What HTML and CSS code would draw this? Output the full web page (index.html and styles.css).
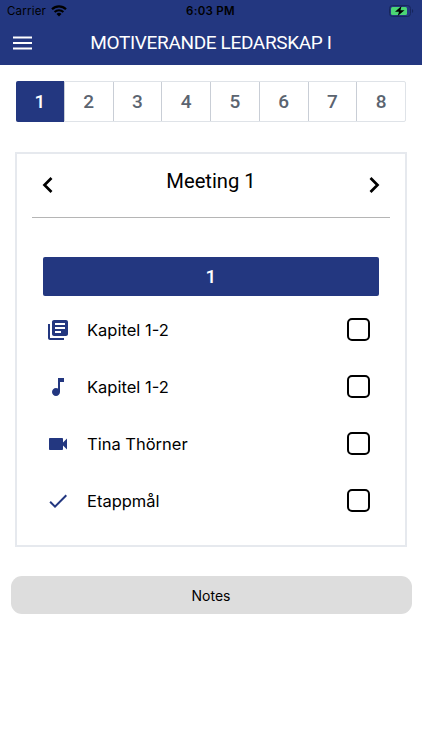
FILE: index.html
```html
<!DOCTYPE html>
<html lang="sv">
<head>
  <meta charset="UTF-8">
  <meta name="viewport" content="width=device-width, initial-scale=1.0">
  <title>Motiverande Ledarskap I</title>
  <link rel="stylesheet" href="styles.css">
</head>
<body>
  <header>
    <div class="status-bar">
      <div class="carrier">
        <span>Carrier</span>
        <svg width="16" height="12" viewBox="0 0 16 12" fill="none" stroke="#000">
          <path d="M1 4.2a10 10 0 0 1 14 0" stroke-width="2.2"/>
          <path d="M3.6 7a6.3 6.3 0 0 1 8.8 0" stroke-width="2"/>
          <path d="M8 11.4L5.5 9a3.6 3.6 0 0 1 5 0z" fill="#000" stroke="none"/>
        </svg>
      </div>
      <span class="time">6:03 PM</span>
      <svg class="battery" width="25" height="12" viewBox="0 0 25 12">
        <rect x=".5" y=".5" width="21" height="11" rx="3" fill="none" stroke="#17265c"/>
        <rect x="2" y="2" width="16" height="8" rx="1.5" fill="#4bd575"/>
        <path d="M23 4v4c1.600-.6 1.600-3.400 0-4z" fill="#17265c"/>
        <path d="M12.500 1L6 6.800h4L8.700 11 15.500 5.300h-4z" fill="#000"/>
      </svg>
    </div>
    <div class="nav-bar">
      <button class="menu" aria-label="Menu">
        <svg width="20" height="14" viewBox="0 0 20 14" fill="#fff">
          <path d="M0 .5h19v2H0zM0 6h19v2H0zM0 11.500h19v2H0z"/>
        </svg>
      </button>
      <h1>MOTIVERANDE LEDARSKAP I</h1>
    </div>
  </header>

  <nav class="tabs">
    <button class="active">1</button>
    <button>2</button>
    <button>3</button>
    <button>4</button>
    <button>5</button>
    <button>6</button>
    <button>7</button>
    <button>8</button>
  </nav>

  <main class="card">
    <div class="card-header">
      <button class="arrow" aria-label="Previous">
        <svg width="12" height="18" viewBox="0 0 12 18" fill="none" stroke="#000" stroke-width="2.700">
          <path d="M9.500 2L2.500 9l7 7"/>
        </svg>
      </button>
      <h2>Meeting 1</h2>
      <button class="arrow" aria-label="Next">
        <svg width="12" height="18" viewBox="0 0 12 18" fill="none" stroke="#000" stroke-width="2.700">
          <path d="M2.500 2l7 7-7 7"/>
        </svg>
      </button>
    </div>
    <div class="section">1</div>
    <ul class="tasks">
      <li>
        <svg class="icon" viewBox="0 0 24 24"><path d="M4 6H2v14c0 1.100.9 2 2 2h14v-2H4V6zm16-4H8c-1.100 0-2 .9-2 2v12c0 1.100.9 2 2 2h12c1.100 0 2-.9 2-2V4c0-1.100-.9-2-2-2zm-1 9H9V9h10v2zm-4 4H9v-2h6v2zm4-8H9V5h10v2z"/></svg>
        <label for="task1">Kapitel 1-2</label>
        <input type="checkbox" id="task1">
      </li>
      <li>
        <svg class="icon" viewBox="0 0 24 24"><path d="M12 3v10.550c-.59-.34-1.270-.55-2-.55-2.210 0-4 1.790-4 4s1.790 4 4 4 4-1.790 4-4V7h4V3h-6z"/></svg>
        <label for="task2">Kapitel 1-2</label>
        <input type="checkbox" id="task2">
      </li>
      <li>
        <svg class="icon" viewBox="0 0 24 24"><path d="M17 10.500V7c0-.55-.45-1-1-1H4c-.55 0-1 .45-1 1v10c0 .55.45 1 1 1h12c.55 0 1-.45 1-1v-3.500l4 4v-11l-4 4z"/></svg>
        <label for="task3">Tina Thörner</label>
        <input type="checkbox" id="task3">
      </li>
      <li>
        <svg class="icon" viewBox="0 0 24 24"><path d="M9 16.170L4.830 12l-1.420 1.410L9 19 21 7l-1.410-1.410z"/></svg>
        <label for="task4">Etappmål</label>
        <input type="checkbox" id="task4">
      </li>
    </ul>
  </main>

  <button class="notes">Notes</button>
</body>
</html>
```
FILE: styles.css
```css
* {
  box-sizing: border-box;
}
body {
  margin: 0;
  background-color: #fff;
  color: #000;
  font-family: Inter, sans-serif;
}
button {
  padding: 0;
  border: none;
  background: none;
  font-family: inherit;
  cursor: pointer;
}
svg {
  display: block;
}
header {
  height: 65px;
  background-color: #233780;
}
.status-bar {
  display: grid;
  grid-template-columns: 1fr auto 1fr;
  align-items: center;
  height: 22px;
  padding: 0 8px 0 7px;
  font-size: 11.5px;
}
.carrier {
  display: flex;
  align-items: center;
  gap: 5px;
  letter-spacing: 0.2px;
}
.time {
  font-weight: 600;
  letter-spacing: 0.3px;
}
.battery {
  justify-self: end;
}
.nav-bar {
  display: grid;
  grid-template-columns: 40px 1fr 40px;
  align-items: center;
  height: 41px;
}
.menu {
  padding-left: 13px;
}
h1 {
  margin: 0;
  color: #fff;
  font-family: Roboto, sans-serif;
  font-size: 19px;
  font-weight: 400;
  letter-spacing: -0.35px;
  text-align: center;
  white-space: nowrap;
}
.tabs {
  display: flex;
  height: 41px;
  margin: 16px 16px 0;
  border: 1px solid #dfe3e8;
  border-radius: 2px;
}
.tabs button {
  flex: 1;
  border-left: 1px solid #c9ced6;
  color: #5b6470;
  font-family: Roboto, sans-serif;
  font-size: 19px;
  font-weight: 500;
}
.tabs button.active {
  margin: -1px 0 -1px -1px;
  border-left: none;
  border-radius: 2px 0 0 2px;
  background-color: #233780;
  color: #fff;
}
.card {
  height: 395px;
  margin: 30px 15px 0;
  border: 2px solid #e6e9ee;
}
.card-header {
  display: flex;
  justify-content: space-between;
  height: 64px;
  margin: 0 15px;
  padding: 0 10px;
  border-bottom: 1px solid #b5b5b5;
}
.arrow {
  height: 61px;
}
h2 {
  margin: 0;
  font-family: Roboto, sans-serif;
  font-size: 20.2px;
  font-weight: 400;
  line-height: 54px;
}
.section {
  height: 39px;
  margin: 39px 26px 5px;
  border-radius: 2px;
  background-color: #233780;
  color: #fff;
  font-family: Roboto, sans-serif;
  font-size: 19px;
  font-weight: 500;
  line-height: 39px;
  text-align: center;
}
.tasks {
  margin: 0;
  padding: 0 35px 0 29px;
  list-style: none;
}
.tasks li {
  display: flex;
  align-items: center;
  height: 57px;
}
.icon {
  width: 24px;
  height: 24px;
  fill: #233780;
}
.tasks label {
  flex: 1;
  padding-left: 17px;
  font-size: 16.5px;
}
.tasks input {
  appearance: none;
  width: 23px;
  height: 23px;
  margin: 0 0 1px;
  border: 2px solid #000;
  border-radius: 5px;
}
.notes {
  display: block;
  width: 401px;
  height: 38px;
  margin: 29px auto 0;
  border-radius: 11px;
  background-color: #ddd;
  color: #000;
  font-size: 14px;
}
```
